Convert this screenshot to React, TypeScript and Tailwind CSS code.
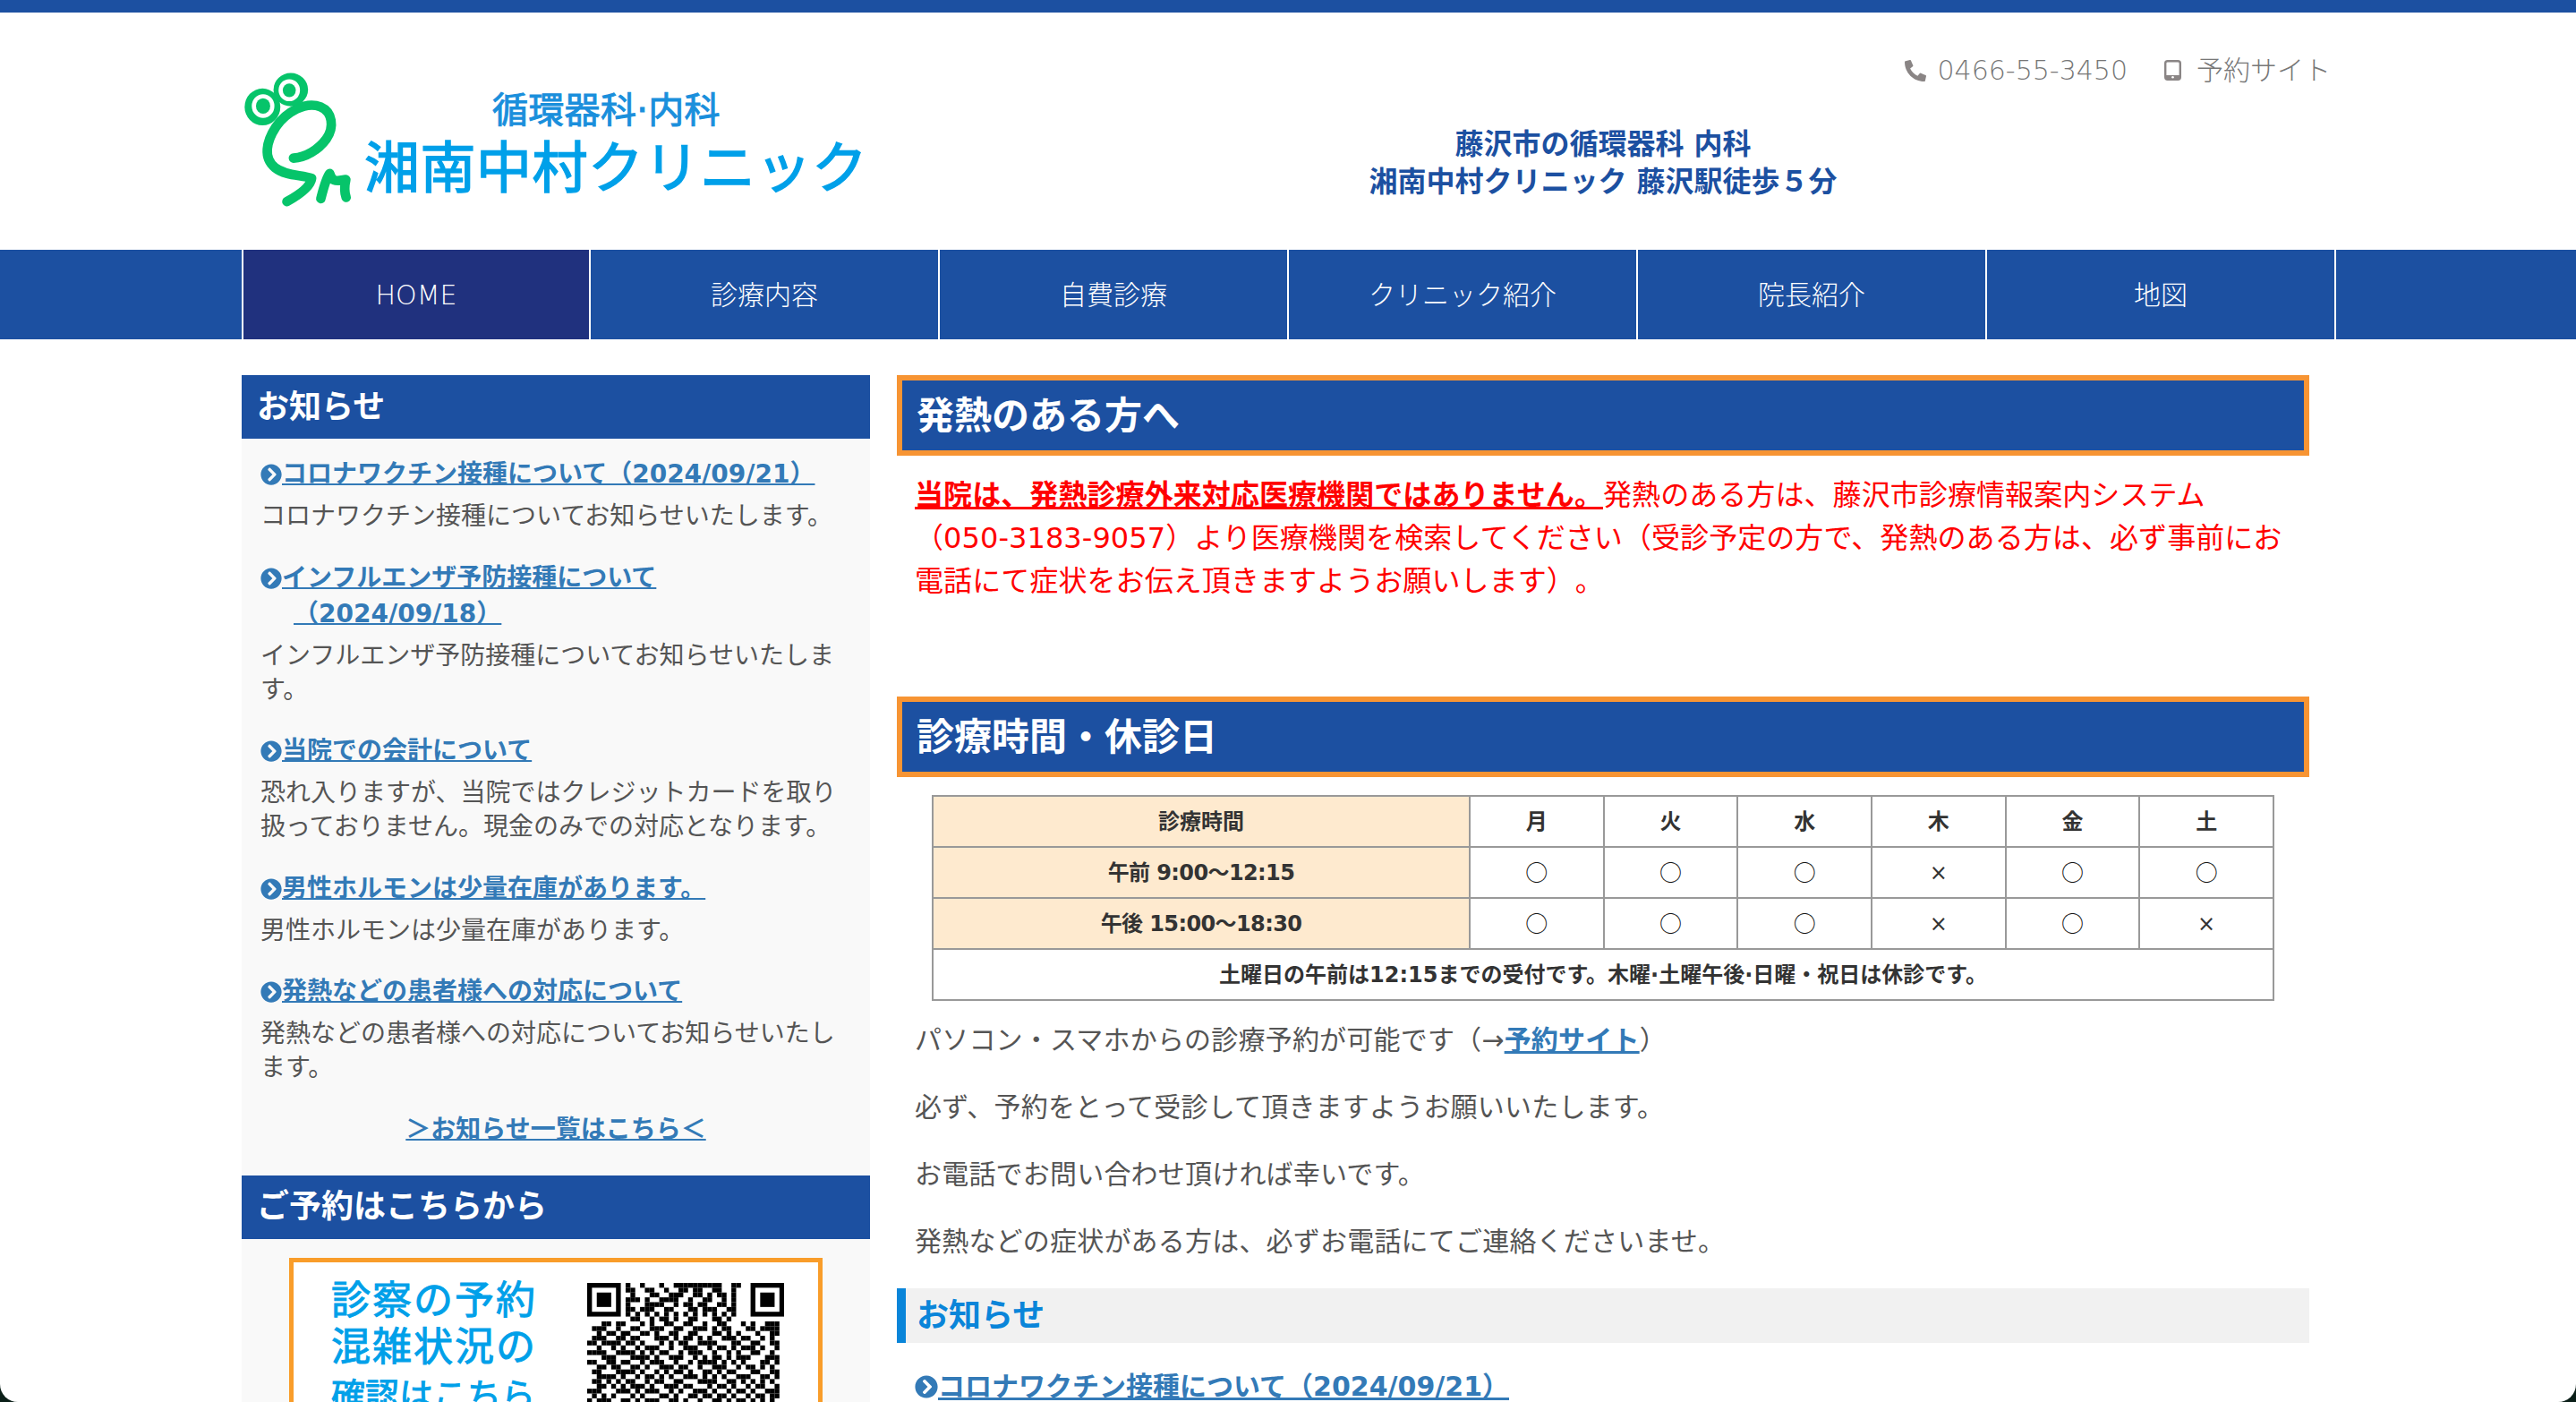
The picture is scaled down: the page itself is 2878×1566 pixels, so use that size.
import React from 'react';
import { FaChevronCircleRight, FaPhoneAlt } from 'react-icons/fa';

const navItems = ['HOME', '診療内容', '自費診療', 'クリニック紹介', '院長紹介', '地図'];

const newsItems = [
  { title: 'コロナワクチン接種について（2024/09/21）', body: 'コロナワクチン接種についてお知らせいたします。' },
  { title: 'インフルエンザ予防接種について（2024/09/18）', body: 'インフルエンザ予防接種についてお知らせいたします。' },
  { title: '当院での会計について', body: '恐れ入りますが、当院ではクレジットカードを取り扱っておりません。現金のみでの対応となります。' },
  { title: '男性ホルモンは少量在庫があります。', body: '男性ホルモンは少量在庫があります。' },
  { title: '発熱などの患者様への対応について', body: '発熱などの患者様への対応についてお知らせいたします。' },
];

const days = ['月', '火', '水', '木', '金', '土'];
const hours = [
  { label: '午前 9:00～12:15', marks: ['○', '○', '○', '×', '○', '○'] },
  { label: '午後 15:00～18:30', marks: ['○', '○', '○', '×', '○', '×'] },
];

const qrRows = [
  '00000000100100010011111111110011000000000',
  '00000000110011001001101100110010000000000',
  '00000000010001100111001101011010000000000',
  '00000000111010011110010011001010000000000',
  '00000000100011110010110110011010000000000',
  '00000000110111001100011011100110000000000',
  '00000000101010101010101010101010000000000',
  '00000000011001011010011000110100000000000',
  '00011011000101001100110010011000101001110',
  '01110010011001110011001110101100011011110',
  '00101101100110100110011000110101000100110',
  '01110011011000111010110101001110110010100',
  '11011110110100010101100111100011001100110',
  '00100101001011100100111001011010111010010',
  '11110011110101011001011100100101001100100',
  '00011100011110100111001010110101110001110',
  '11001101100101110010010111101010100011010',
  '00110110011010011101100100111001011010100',
  '01100011110100101011010011010110001100110',
  '00111101001011010100111010101001110011010',
  '01101010110010110011000111100110101010100',
  '00110101011101001110110001011010010110010',
  '11100011101011100101001110100101101001110',
  '01010100010100011010011011011010010110110',
  '10111001101011100110100100110101101010100',
  '01101110010100111011011011001010010111010',
];

function FrogLogo() {
  return (
    <svg viewBox="0 0 400 510" className="w-[133px] h-[170px] shrink-0">
      <g fill="none" stroke="#06c46a" strokeWidth="32" strokeLinecap="round" strokeLinejoin="round">
        <path d="M174 320 C215 318 258 292 285 255 C312 215 305 165 265 148 C215 128 150 165 115 215 C82 265 72 320 112 352 C150 382 205 375 235 388 C232 415 190 445 152 466" />
        <path d="M266 456 C274 425 284 385 296 372 C304 395 310 400 350 392 C345 415 345 435 351 452" />
      </g>
      <ellipse cx="70" cy="148" rx="60" ry="62" fill="#06c46a" />
      <ellipse cx="72" cy="145" rx="38" ry="40" fill="#fff" />
      <ellipse cx="72" cy="145" rx="24" ry="26" fill="#06c46a" />
      <ellipse cx="165" cy="90" rx="58" ry="56" fill="#06c46a" />
      <ellipse cx="160" cy="92" rx="36" ry="37" fill="#fff" />
      <ellipse cx="160" cy="92" rx="22" ry="23" fill="#06c46a" />
    </svg>
  );
}

function QrCode() {
  const cell = 5.37;
  const finders = [0, 34];
  return (
    <svg width="220" height="140" viewBox="0 0 220 140" className="shrink-0">
      {qrRows.map((row, y) =>
        row.split('').map((c, x) =>
          c === '1' ? <rect key={`${x}-${y}`} x={x * cell} y={y * cell} width={cell} height={cell} fill="#000" /> : null
        )
      )}
      {finders.map((col) => (
        <g key={col}>
          <rect x={col * cell} y="0" width={7 * cell} height={7 * cell} fill="#000" />
          <rect x={(col + 1) * cell} y={cell} width={5 * cell} height={5 * cell} fill="#fff" />
          <rect x={(col + 2) * cell} y={2 * cell} width={3 * cell} height={3 * cell} fill="#000" />
        </g>
      ))}
    </svg>
  );
}

function SectionTitle({ children }: { children: React.ReactNode }) {
  return (
    <h2 className="h-[90px] border-[6px] border-[#f79433] bg-[#1c50a1] pl-[16px] flex items-center text-[42px] font-bold text-white">
      {children}
    </h2>
  );
}

function SideTitle({ children }: { children: React.ReactNode }) {
  return (
    <h3 className="h-[71px] bg-[#1c50a1] pl-[17px] flex items-center text-[36px] font-bold text-white">{children}</h3>
  );
}

export default function App() {
  return (
    <div className="w-[2878px] h-[1566px] bg-[#0b1f18] overflow-hidden [text-spacing-trim:space-all] font-['DejaVu_Sans','Noto_Sans_CJK_JP',sans-serif]">
      <div className="h-full bg-white rounded-b-[20px] overflow-hidden">
        <div className="h-[14px] bg-[#1c50a1]" />

        <header className="h-[265px] ml-[270px] w-[2340px] flex">
          <div className="flex w-[732px] pt-[56px] items-start">
            <FrogLogo />
            <div className="ml-[4px] mt-[28px] w-[560px]">
              <div className="pl-[143px] h-[50px] leading-[50px] text-[40px] tracking-[0.3px] [-webkit-text-stroke:1px_#1a8fdc] text-[#1a8fdc] whitespace-nowrap">
                循環器科·内科
              </div>
              <div className="mt-[6px] h-[70px] leading-[70px] text-[62px] tracking-[0.5px] [-webkit-text-stroke:1.5px_#00a0e9] text-[#00a0e9] whitespace-nowrap">
                湘南中村クリニック
              </div>
            </div>
          </div>
          <div className="flex-1 flex flex-col">
            <div className="mt-[42px] h-[45px] flex items-center justify-end pr-[6px] text-[30px] font-light text-[#777]">
              <FaPhoneAlt className="text-[24px] text-[#8a8585]" />
              <span className="ml-[12px]">0466-55-3450</span>
              <svg viewBox="0 0 19 23" className="ml-[41px] w-[19px] h-[23px]">
                <rect x="1.2" y="1.2" width="16.6" height="20.6" rx="2.5" fill="none" stroke="#8a8585" strokeWidth="2.4" />
                <rect x="1" y="17" width="17" height="5" fill="#8a8585" />
                <circle cx="9.5" cy="19.3" r="1.3" fill="#fff" />
              </svg>
              <span className="ml-[17px]">予約サイト</span>
            </div>
            <div className="mt-[39px] text-center text-[32px] leading-[42px] font-bold text-[#1c50a1] w-[1578px]">
              藤沢市の循環器科 内科
              <br />
              湘南中村クリニック 藤沢駅徒歩５分
            </div>
          </div>
        </header>

        <nav className="h-[100px] bg-[#1c50a1]">
          <ul className="ml-[270px] w-[2340px] h-full flex border-r-2 border-white">
            {navItems.map((item, i) => (
              <li
                key={item}
                className={
                  i === 0
                    ? 'w-[388px] border-l-2 border-white bg-[#20317e] flex items-center justify-center text-[30px] font-light text-white'
                    : 'w-[390px] border-l-2 border-white flex items-center justify-center text-[30px] font-light text-white'
                }
              >
                {item}
              </li>
            ))}
          </ul>
        </nav>

        <div className="ml-[270px] w-[2340px] pt-[40px] flex items-start">
          <aside className="w-[702px] bg-[#f9f9f9] text-[28px] text-[#555]">
            <SideTitle>お知らせ</SideTitle>
            <div className="pt-[20px] px-[21px]">
              {newsItems.map((n) => (
                <div key={n.title} className="mb-[29.6px]">
                  <p className="mb-[8px] pl-[37px] -indent-[37px] leading-[40px] font-bold text-[#337ab7]">
                    <a href="#" className="underline decoration-2">
                      <FaChevronCircleRight className="inline w-[24px] h-[24px] align-[-3px]" />
                      {n.title}
                    </a>
                  </p>
                  <p className="leading-[38px]">{n.body}</p>
                </div>
              ))}
              <p className="text-center leading-[40px] font-bold text-[#337ab7] mb-[31px]">
                <a href="#" className="underline decoration-2">＞お知らせ一覧はこちら＜</a>
              </p>
            </div>
            <SideTitle>ご予約はこちらから</SideTitle>
            <div className="pt-[21px] px-[53px] pb-[40px]">
              <div className="h-[300px] border-[5px] border-[#f99d2a] bg-white flex pt-[17px] pl-[42px]">
                <div className="w-[246px] text-[44px] leading-[52px] tracking-[2px] [-webkit-text-stroke:1px_#00a0e9] text-[#00a0e9]">
                  診察の予約
                  <br />
                  混雑状況の
                  <br />
                  <span className="text-[38px] tracking-normal">確認はこちら</span>
                </div>
                <div className="ml-[40px] pt-[6px]">
                  <QrCode />
                </div>
              </div>
            </div>
          </aside>

          <main className="ml-[30px] w-[1578px]">
            <SectionTitle>発熱のある方へ</SectionTitle>
            <p className="mt-[20px] px-[20px] text-[32px] leading-[48px] tracking-[0.08px] text-[#f00] h-[249px]">
              <span className="font-bold underline decoration-[3px]">当院は、発熱診療外来対応医療機関ではありません。</span>
              発熱のある方は、藤沢市診療情報案内システム（050-3183-9057）より医療機関を検索してください（受診予定の方で、発熱のある方は、必ず事前にお電話にて症状をお伝え頂きますようお願いします）。
            </p>
            <SectionTitle>診療時間・休診日</SectionTitle>
            <table className="mt-[20px] ml-[39px] w-[1500px] table-fixed border-collapse text-[24px] text-[#333]">
              <tbody>
                <tr className="h-[57px]">
                  <th className="w-[600px] border-2 border-[#999] bg-[#feeacf] font-bold">診療時間</th>
                  {days.map((d) => (
                    <th key={d} className="border-2 border-[#999] font-bold">{d}</th>
                  ))}
                </tr>
                {hours.map((h) => (
                  <tr key={h.label} className="h-[57px]">
                    <th className="border-2 border-[#999] bg-[#feeacf] font-bold tracking-[-0.6px]">{h.label}</th>
                    {h.marks.map((m, i) => (
                      <td
                        key={i}
                        className={
                          m === '○'
                            ? "border-2 border-[#999] text-center text-[25px] leading-[25px] pb-[3px] font-normal text-[#111] font-['Noto_Sans_CJK_JP',sans-serif]"
                            : 'border-2 border-[#999] text-center font-normal'
                        }
                      >
                        {m}
                      </td>
                    ))}
                  </tr>
                ))}
                <tr className="h-[57px]">
                  <td colSpan={7} className="border-2 border-[#999] text-center font-bold">
                    土曜日の午前は12:15までの受付です。木曜·土曜午後·日曜・祝日は休診です。
                  </td>
                </tr>
              </tbody>
            </table>
            <div className="mt-[21px] px-[20px] text-[30px] leading-[45px] tracking-[0.2px] text-[#555]">
              <p className="mb-[30px]">
                パソコン・スマホからの診療予約が可能です（→
                <a href="#" className="font-bold text-[#337ab7] underline decoration-[3px]">予約サイト</a>
                ）
              </p>
              <p className="mb-[30px]">必ず、予約をとって受診して頂きますようお願いいたします。</p>
              <p className="mb-[30px]">お電話でお問い合わせ頂ければ幸いです。</p>
              <p className="mb-[30px]">発熱などの症状がある方は、必ずお電話にてご連絡くださいませ。</p>
            </div>
            <h3 className="h-[61px] border-l-[10px] border-[#0a85d9] bg-[#f1f1f1] pl-[12px] flex items-center text-[36px] font-bold text-[#0a85d9]">
              お知らせ
            </h3>
            <p className="mt-[26px] px-[20px] text-[30px] leading-[45px] font-bold text-[#337ab7]">
              <a href="#" className="underline decoration-[3px]">
                <FaChevronCircleRight className="inline w-[26px] h-[26px] align-[-3px]" />
                コロナワクチン接種について（2024/09/21）
              </a>
            </p>
          </main>
        </div>
      </div>
    </div>
  );
}
